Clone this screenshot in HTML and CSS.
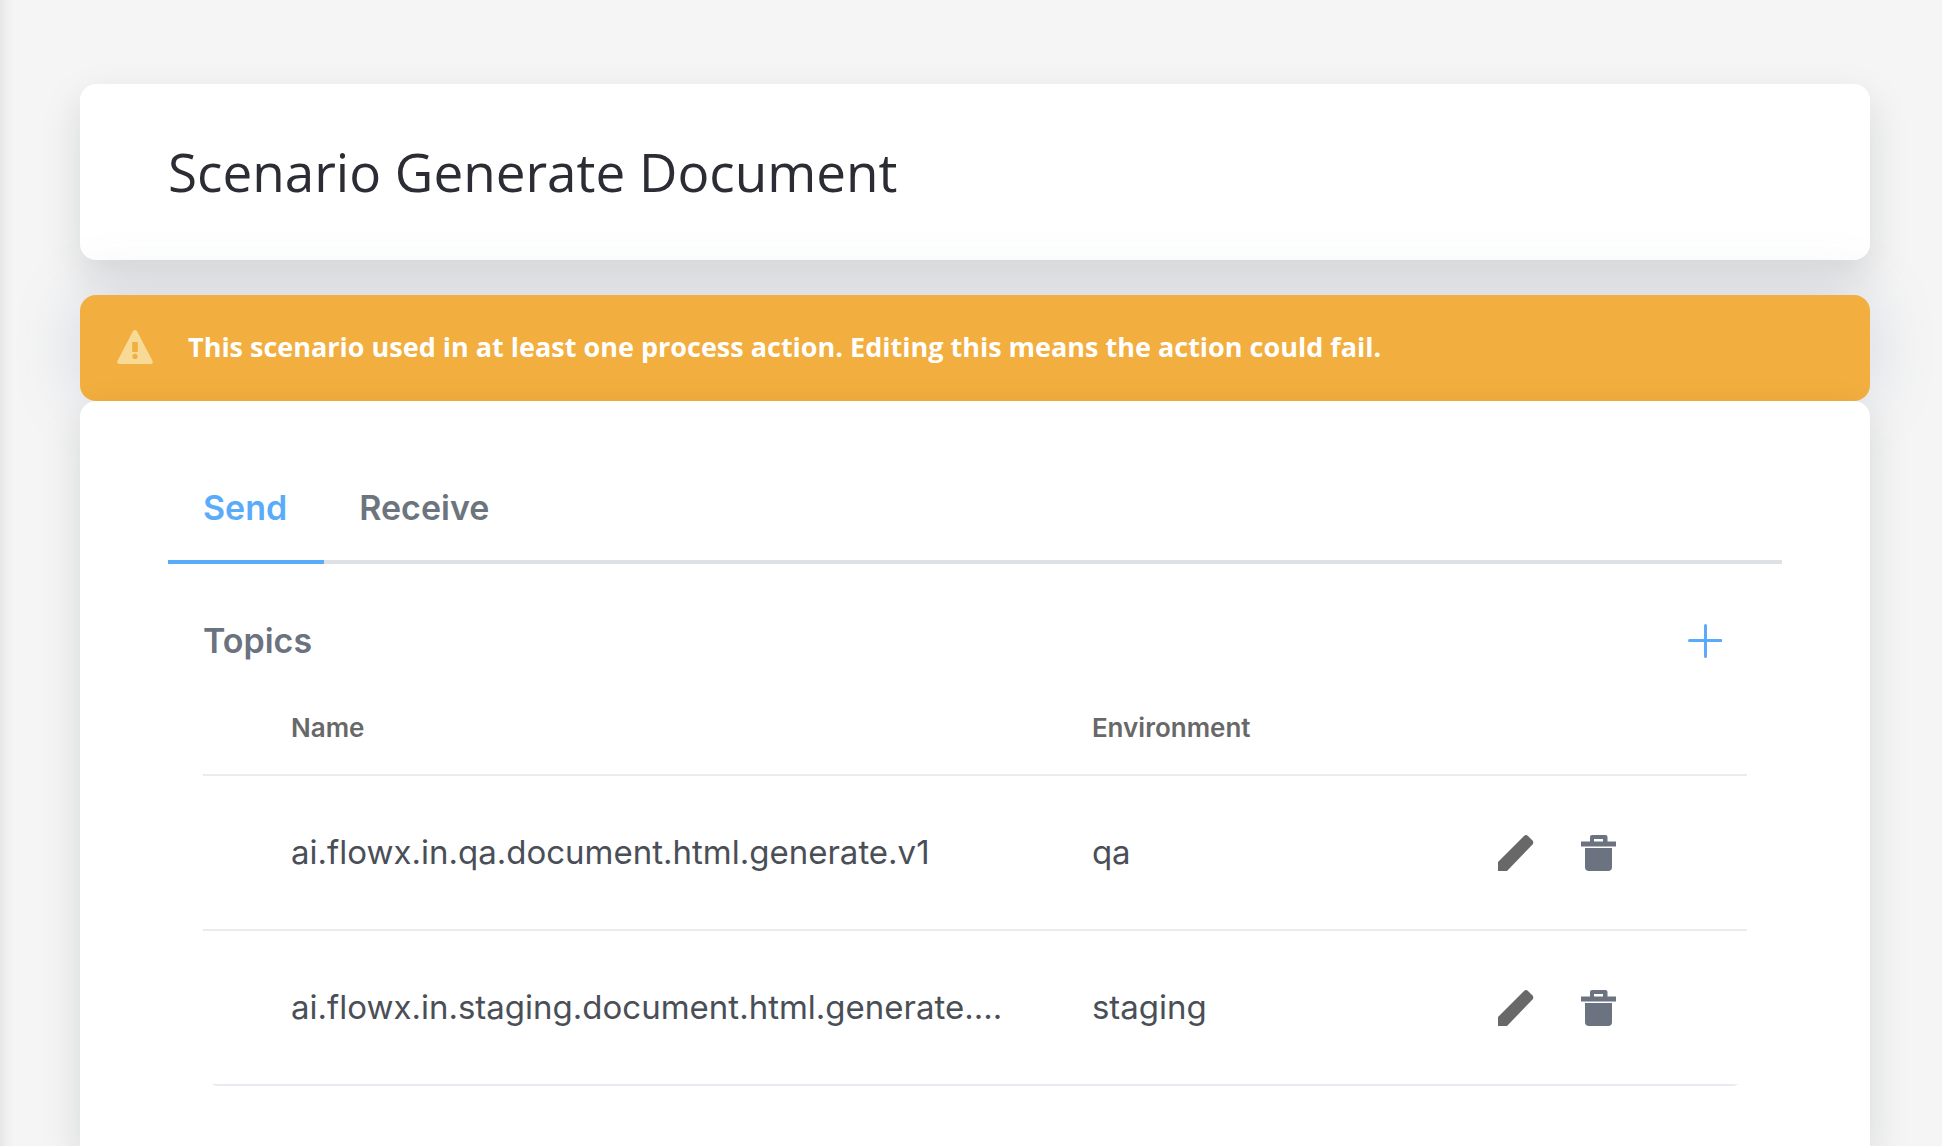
FILE: index.html
```html
<!DOCTYPE html>
<html lang="en">
<head>
<meta charset="utf-8">
<title>Scenario Generate Document</title>
<link rel="stylesheet" href="styles.css">
</head>
<body>
<svg class="sprite" aria-hidden="true">
  <symbol id="icon-edit" viewBox="0 0 36 36">
    <path d="M0 36V27L26 1Q28 -1 30 1L34.500 5.500Q36 7.500 34.500 9.500L9 36Z"/>
  </symbol>
  <symbol id="icon-trash" viewBox="0 0 36 36">
    <path fill-rule="evenodd" d="M0 6.500H9V2Q9 0 11 0H24.500Q26.500 0 26.500 2V6.500H35V11.500H0ZM13 4V6.500H22V4Z"/>
    <path d="M4 13H31V32Q31 36 27 36H8Q4 36 4 32Z"/>
  </symbol>
</svg>
<main class="page">
  <header class="card title-card">
    <h1 class="title">Scenario Generate Document</h1>
  </header>
  <div class="banner" role="alert">
    <svg class="banner-icon" viewBox="0 0 36 34" aria-hidden="true">
      <path fill-rule="evenodd" d="M15.800 1.400Q18 -1.400 20.200 1.400L35.600 31Q36.600 34 33.600 34H2.400Q-0.600 34 0.400 31ZM15.200 12V22H20.800V12ZM18 23.800A2.600 2.600 0 1 0 18 29A2.600 2.600 0 1 0 18 23.800Z"/>
    </svg>
    <p class="banner-text">This scenario used in at least one process action. Editing this means the action could fail.</p>
  </div>
  <section class="card content-card">
    <nav class="tabs" role="tablist">
      <button class="tab tab-active" type="button" role="tab" aria-selected="true">Send</button>
      <button class="tab" type="button" role="tab" aria-selected="false">Receive</button>
    </nav>
    <div class="topics">
      <div class="topics-head">
        <h2 class="topics-title">Topics</h2>
        <button class="icon-button" type="button" aria-label="Add topic">
          <svg class="icon-add" viewBox="0 0 34 34" aria-hidden="true"><path d="M17.500 1.500V32.500M1.500 16.500H33"/></svg>
        </button>
      </div>
      <table class="table">
        <colgroup><col class="col-name"><col class="col-env"><col class="col-actions"></colgroup>
        <thead>
          <tr><th>Name</th><th>Environment</th><th></th></tr>
        </thead>
        <tbody>
          <tr>
            <td>ai.flowx.in.qa.document.html.generate.v1</td>
            <td>qa</td>
            <td>
              <div class="actions">
                <button class="icon-button" type="button" aria-label="Edit"><svg class="icon icon-edit" aria-hidden="true"><use href="#icon-edit"/></svg></button>
                <button class="icon-button" type="button" aria-label="Delete"><svg class="icon" aria-hidden="true"><use href="#icon-trash"/></svg></button>
              </div>
            </td>
          </tr>
          <tr>
            <td>ai.flowx.in.staging.document.html.generate....</td>
            <td>staging</td>
            <td>
              <div class="actions">
                <button class="icon-button" type="button" aria-label="Edit"><svg class="icon icon-edit" aria-hidden="true"><use href="#icon-edit"/></svg></button>
                <button class="icon-button" type="button" aria-label="Delete"><svg class="icon" aria-hidden="true"><use href="#icon-trash"/></svg></button>
              </div>
            </td>
          </tr>
        </tbody>
      </table>
    </div>
  </section>
</main>
</body>
</html>
```
FILE: styles.css
```css
* { box-sizing: border-box; }

html, body { height: 100%; }

body {
  margin: 0;
  overflow: hidden;
  background: #f5f5f5;
  font-family: Inter, "Liberation Sans", sans-serif;
  color: #4a4f57;
}

h1, h2, p { margin: 0; font-weight: 400; }

.sprite { display: none; }

.page {
  display: flex;
  flex-direction: column;
  min-height: 100%;
  padding: 84px 72px 0 80px;
  box-shadow: inset 16px 0 16px -16px rgba(0, 0, 0, 0.12);
}

.card {
  border-radius: 16px;
  background: #fff;
  box-shadow: 0 16px 40px rgba(10, 25, 20, 0.13);
}

.title-card { padding: 48px 88px; }

.title {
  font: 400 53px/80px "Open Sans", sans-serif;
  color: #2b2c34;
}

.banner {
  display: flex;
  align-items: center;
  gap: 35px;
  margin-top: 35px;
  padding: 32px 37px 34px;
  border-radius: 16px;
  background: #f2ae3e;
  box-shadow: 0 0 64px rgba(90, 110, 145, 0.22);
}

.banner-icon {
  width: 36px;
  height: 34px;
  fill: #f8da97;
}

.banner-text {
  font: 700 27px/40px "Open Sans", sans-serif;
  color: #fff;
}

.content-card {
  flex: 1;
  padding: 64px 88px 60px;
  border-bottom-left-radius: 0;
  border-bottom-right-radius: 0;
}

.tabs {
  display: flex;
  box-shadow: inset 0 -4px #dee2e6;
}

.tab {
  padding: 21px 37px 31px 35px;
  border: 0;
  border-bottom: 4px solid transparent;
  background: none;
  font: 600 34px/43px Inter, sans-serif;
  color: #6c757d;
}

.tab-active {
  border-bottom-color: #5aabf9;
  color: #5aabf9;
}

.topics { padding: 55px 35px 0; }

.topics-head {
  display: flex;
  align-items: center;
  justify-content: space-between;
  padding-right: 25px;
}

.topics-title {
  font: 600 34px/43px Inter, sans-serif;
  color: #6b7280;
}

.icon-button {
  display: flex;
  padding: 0;
  border: 0;
  background: none;
}

.icon-add {
  width: 34px;
  height: 34px;
  fill: none;
  stroke: #5aabf9;
  stroke-width: 3;
  stroke-linecap: round;
}

.table {
  width: 100%;
  overflow: hidden;
  border-collapse: separate;
  border-spacing: 0;
  border-radius: 16px;
  table-layout: fixed;
}

.col-name { width: 52%; }
.col-env { width: 26%; }

.table th,
.table td {
  border-bottom: 2px solid #e9ecef;
  text-align: left;
  white-space: nowrap;
}

.table th {
  padding: 46px 0 26px 88px;
  font: 600 26px/40px Inter, sans-serif;
  color: #686868;
}

.table td {
  padding: 55px 0 55px 88px;
  font-size: 33px;
  line-height: 43px;
}

.table th:nth-child(2),
.table td:nth-child(2) { padding-left: 86px; }

.table tbody tr:last-child td { border-bottom-color: #e9e9ef; }

.table th:last-child,
.table td:last-child { padding-left: 91px; }

.actions {
  display: flex;
  gap: 47px;
}

.icon {
  width: 36px;
  height: 36px;
  fill: #6b7280;
}

.icon-edit { fill: #686868; }
```
